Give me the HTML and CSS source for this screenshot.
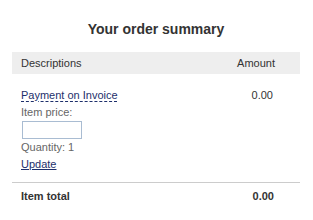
FILE: index.html
```html
<!DOCTYPE html>
<html lang="en">
<head>
    <meta charset="UTF-8">
    <meta name="viewport" content="width=device-width, initial-scale=1.0">
    <title>Your order summary</title>
    <link rel="stylesheet" href="styles.css">
</head>
<body>

    <div class="summary">
        <h2>Your order summary</h2>

        <div class="row head">
            <span>Descriptions</span>
            <span class="amount">Amount</span>
        </div>

        <!-- order item -->
        <div class="row item">
            <div class="desc">
                <span class="item-name">Payment on Invoice</span>
                <div class="muted">Item price:</div>
                <input type="text" class="price-input">
                <div class="muted">Quantity: 1</div>
                <a href="#" class="update">Update</a>
            </div>
            <span class="amount">0.00</span>
        </div>

        <div class="row total">
            <span>Item total</span>
            <span class="amount">0.00</span>
        </div>
    </div>

</body>
</html>
```

FILE: styles.css
```css
body {
    font-family: 'Liberation Sans', Arial, sans-serif;
    margin: 0;
    padding: 0;
    background-color: #fff;
    color: #333;
}
.summary {
    padding: 0 13px 0 12px;
}
.summary h2 {
    margin: 21px 0 15px;
    font-size: 14px;
    line-height: 16px;
    text-align: center;
    color: #333;
}
.row {
    display: flex;
    justify-content: space-between;
    font-size: 11px;
    line-height: 17px;
    padding: 0 25px 0 9px;
}
.head {
    background-color: #eeeeee;
    height: 22px;
    line-height: 22px;
}
.item {
    padding-top: 13px;
    padding-bottom: 9px;
    border-bottom: 1px solid #cccccc;
}
.item .amount {
    padding-right: 2px;
}
.desc {
    display: flex;
    flex-direction: column;
    align-items: flex-start;
}
.item-name {
    color: #1d2f6b;
    text-decoration: underline dashed;
    text-underline-offset: 2px;
}
.muted {
    color: #666;
}
.price-input {
    box-sizing: border-box;
    width: 60px;
    height: 18px;
    margin: 0 0 0 1px;
    padding: 0;
    border: 1px solid #a9bcd2;
    border-radius: 0;
    outline: none;
}
.update {
    color: #1d2f6b;
}
.total {
    font-weight: bold;
    padding-top: 5px;
}
.total .amount {
    padding-right: 1px;
}
```
